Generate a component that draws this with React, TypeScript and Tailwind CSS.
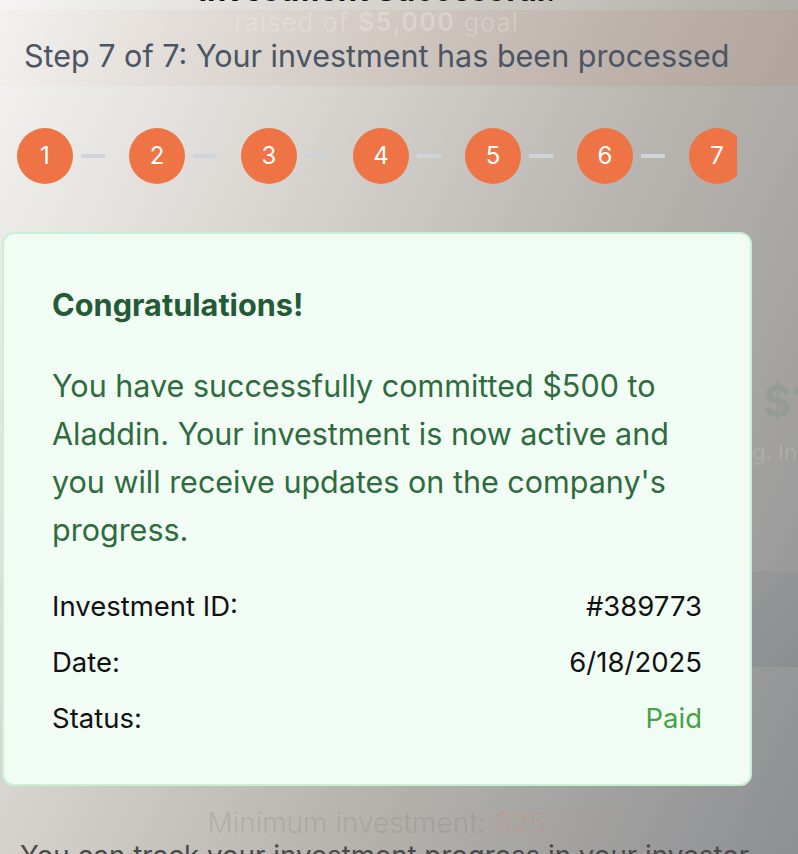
import React from "react";

export default function App() {
  const steps = [1, 2, 3, 4, 5, 6, 7];
  return (
    <div className="w-[798px] h-[854px] overflow-hidden flex flex-col bg-[linear-gradient(115deg,#f5f4f2_0%,#d9d5d1_30%,#bdb9b4_55%,#a9a7a4_75%,#8d8f93_100%)] font-['Inter',sans-serif]">
      <div className="w-[754px] text-center flex flex-col shrink-0">
        <p className="-mt-[27px] text-[31px] leading-[34px] font-bold text-[#111111] whitespace-nowrap">
          Investment Successful!
        </p>
      </div>
      <div className="mt-[3px] h-[76px] shrink-0 flex flex-col bg-[linear-gradient(90deg,rgba(200,165,145,0.03),rgba(185,145,125,0.25))]">
        <div className="w-[754px] text-center flex flex-col">
          <p className="-mt-[2px] text-[25px] leading-[28px] font-light tracking-[1.5px] text-white/25 whitespace-nowrap">
            raised of <span className="font-semibold">$5,000</span> goal
          </p>
        </div>
        <p className="mt-[2px] pl-[24px] text-[30.5px] leading-[36px] text-[#4b5563] whitespace-nowrap">
          Step 7 of 7: Your investment has been processed
        </p>
      </div>
      <div className="mt-[42px] w-[737px] shrink-0 overflow-hidden">
        <div className="flex items-center pl-[17px] w-[900px]">
          {steps.map((s) => (
            <div key={s} className="flex items-center shrink-0">
              <div className="w-14 h-14 rounded-full bg-[#ef7445] flex items-center justify-center text-white text-[24px] leading-none">
                {s}
              </div>
              {s < 7 && <div className="ml-2 mr-6 w-6 h-1 bg-[#cfd3da]" />}
            </div>
          ))}
        </div>
      </div>
      <div className="mt-[48px] flex shrink-0">
        <div className="ml-[2px] w-[750px] shrink-0 rounded-xl border-2 border-[#c6f1d2] bg-[#f1fdf4] px-12 pt-12 pb-[50px]">
          <h2 className="text-[30.7px] leading-[45px] font-bold text-[#255a36]">Congratulations!</h2>
          <p className="mt-[35px] text-[30.5px] leading-[48px] text-[#2f6b3e]">
            You have successfully committed $500 to Aladdin. Your investment is now active and you will receive updates on the company's progress.
          </p>
          <div className="mt-[36px] flex flex-col gap-6 text-[27.5px] leading-[32px] text-[#111111]">
            <div className="flex justify-between">
              <span>Investment ID:</span>
              <span>#389773</span>
            </div>
            <div className="flex justify-between">
              <span>Date:</span>
              <span>6/18/2025</span>
            </div>
            <div className="flex justify-between">
              <span>Status:</span>
              <span className="text-[#45a249]">Paid</span>
            </div>
          </div>
        </div>
        <div className="w-[46px] shrink-0 overflow-hidden flex flex-col">
          <div className="mt-[143px] ml-[11px] text-[44px] leading-[52px] font-bold text-[rgba(60,120,75,0.12)] whitespace-nowrap">
            $1,250
          </div>
          <div className="mt-[11px] text-[22px] leading-[28px] text-[rgba(255,255,255,0.15)] whitespace-nowrap">
            g. In
          </div>
          <div className="mt-[105px] h-[96px] bg-[linear-gradient(135deg,#98989a,#8b8d91)]" />
        </div>
      </div>
      <div className="w-[754px] shrink-0 text-center mt-[22px]">
        <p className="text-[28px] leading-[30px] font-light text-[rgba(120,115,110,0.22)] whitespace-nowrap">
          Minimum investment: <span className="font-semibold text-[rgba(230,120,90,0.15)]">$25</span>
        </p>
      </div>
      <p className="mt-[1px] shrink-0 w-[770px] pl-[20px] text-[27.7px] leading-[32px] text-[#4a4a4a]">
        You can track your investment progress in your investor dashboard.
      </p>
    </div>
  );
}
